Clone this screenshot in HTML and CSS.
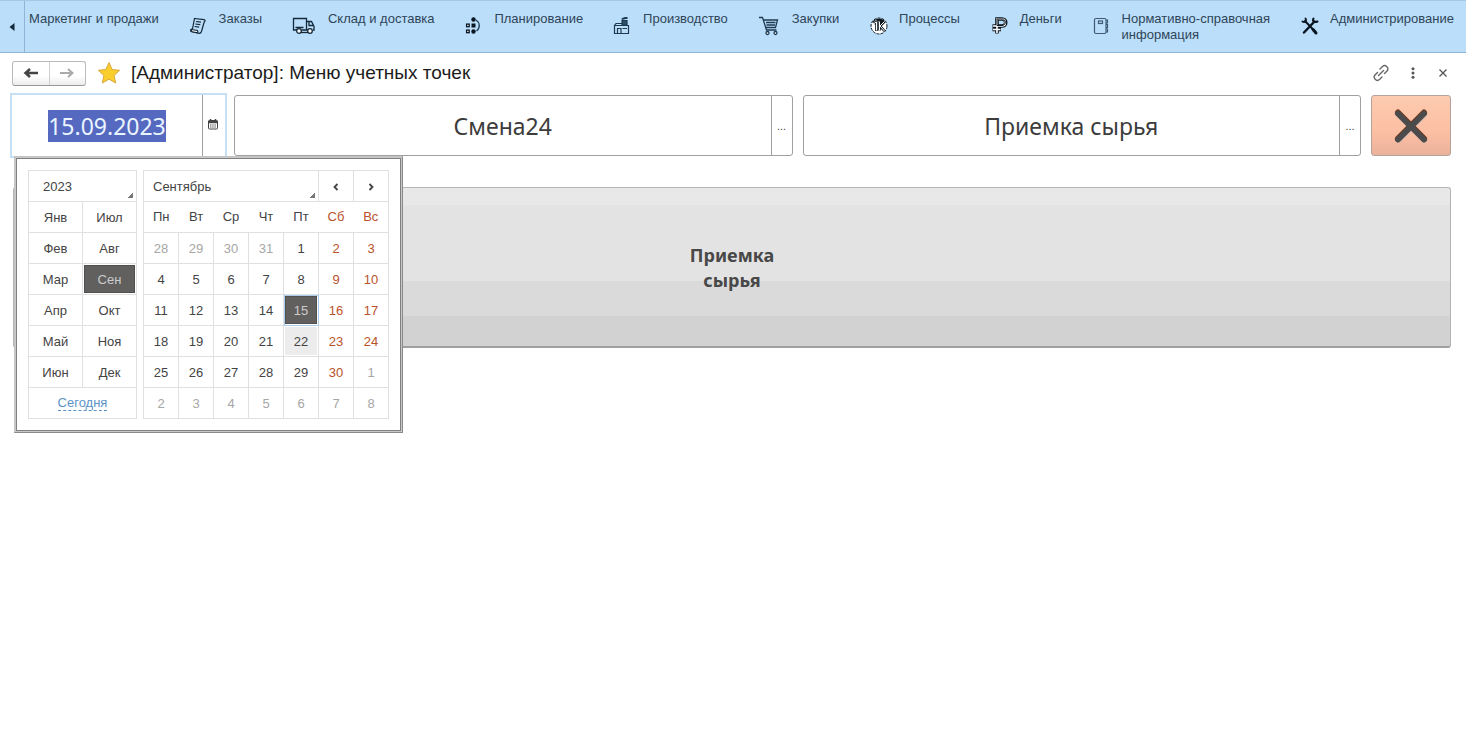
FILE: index.html
```html
<!DOCTYPE html>
<html lang="ru">
<head>
<meta charset="utf-8">
<title>Меню учетных точек</title>
<link rel="stylesheet" href="styles.css">
</head>
<body>
<nav class="sections">
  <button class="scroll-back" aria-label="Назад по разделам"><svg width="6" height="8" viewBox="0 0 6 8"><path d="M5.500 0v8L0.500 4z" fill="#12293b"/></svg></button>
  <div class="section-list">
    <a class="section" href="#">Маркетинг и продажи</a>
    <a class="section" href="#"><svg class="icon" width="20" height="20" viewBox="0 0 20 20" fill="none" stroke="#142838" stroke-width="1.200"><path d="M5.500 2.500l9.500 1.200c1.700.4 1.200 1.800.2 2.300l-2.700 9.500c-.5 1.500-1.500 2-3 1.700l-7-1.700c-1.500-.6-1-2.400.3-2.500h.7z"/><path d="M2.500 13.500l6 1c.6.900.2 2-.3 2.400l-6-1.400z" fill="#fff"/><path d="M7 5.500l5 .7M6.300 8l5 .7M5.600 10.500l4.500.7"/></svg>Заказы</a>
    <a class="section" href="#"><svg class="icon" width="26" height="20" viewBox="0 0 26 20" fill="none" stroke="#142838" stroke-width="1.300"><path d="M5 14H1.500V2.500h13V14H9.500M14.500 5.500h5l2.500 5v3.500h-1M14.500 14h1.500M17 5.500v4h5M3.500 11.500h8"/><circle cx="7" cy="15" r="2.300" fill="#fff"/><circle cx="18" cy="15" r="2.300" fill="#fff"/><path d="M9 16.500h7"/></svg>Склад и доставка</a>
    <a class="section" href="#"><svg class="icon" width="20" height="20" viewBox="0 0 20 20" fill="#0c1620"><circle cx="9.500" cy="3.500" r="2.200"/><rect x="7.500" y="7.500" width="4" height="4"/><circle cx="9.500" cy="15.500" r="2.200"/><g fill="#fff" stroke="#0c1620" stroke-width="1.300"><rect x="2.600" y="8.100" width="2.600" height="2.600"/><rect x="2.600" y="14.100" width="2.600" height="2.600"/></g><path d="M12 4c4 2.500 4.500 8 .5 11" fill="none" stroke="#23435c" stroke-width="1.300"/></svg>Планирование</a>
    <a class="section" href="#"><svg class="icon" width="20" height="20" viewBox="0 0 20 20" fill="none" stroke="#1f3a50" stroke-width="1.200"><path d="M1.500 17.500V9.500h14v8zM1.500 9.500L3 7.500h6M1 17.500h15M4.500 17v-4.500h3.500V17M9.500 12.500h4.500"/><path d="M9 4.500h5V9H9z" fill="#2d5069"/><path d="M9 3.500c1-1.500 2-.5 3-1.500h2.500" stroke-width="2"/></svg>Производство</a>
    <a class="section" href="#"><svg class="icon" width="24" height="20" viewBox="0 0 24 20" fill="none" stroke="#1f3a50" stroke-width="1.300"><path d="M1 1.500h3.500l4 12.500h10M5.500 4h14l-2 7.500H8M8 6.500h9.500M8.500 9h8.500"/><circle cx="9.500" cy="17" r="1.500" fill="#fff"/><circle cx="17.500" cy="17" r="1.500" fill="#fff"/></svg>Закупки</a>
    <a class="section" href="#"><svg class="icon" width="20" height="20" viewBox="0 0 20 20" fill="none"><circle cx="10" cy="10" r="8" fill="#fff" stroke="#101a22" stroke-width="1" stroke-dasharray="3 1"/><path d="M3.500 6C6 2 13 1 16 5.500L12 8.500 10 5.500 7 4 4 7z" fill="#101a22"/><path d="M5 7.500l2.500-1.500v9M10.500 5.500v9M15.500 5.500L11 10l4.500 5" stroke="#101a22" stroke-width="2.600"/><path d="M5 7.500l2.500-1.500v8.500M10.500 5.500v9M15.500 5.500L11 10l4.500 5" stroke="#fff" stroke-width="1"/></svg>Процессы</a>
    <a class="section" href="#"><svg class="icon" width="20" height="20" viewBox="0 0 20 20" fill="none"><path d="M7 17.500V3h5c5 0 5 7 0 7H2.500M2.500 13.500H11" stroke="#0c1620" stroke-width="3.600"/><path d="M7 17V3h5c4.500 0 4.500 7 0 7H3M3 13.500h7.500" stroke="#fff" stroke-width="1.600"/><path d="M7 9.500V3h5c4.500 0 4.500 6.500 0 6.500z" stroke="#0c1620"/></svg>Деньги</a>
    <a class="section" href="#"><svg class="icon" width="20" height="20" viewBox="0 0 20 20" fill="none" stroke="#3d5a72" stroke-width="1.200"><rect x="2.500" y="2.500" width="11.500" height="15" rx="1.500"/><path d="M14 4h1.500v3H14M14 8.500h1.500v3H14M14 13h1.500v3H14"/><rect x="6.500" y="5" width="4" height="2.500"/></svg>Нормативно-справочная<br>информация</a>
    <a class="section" href="#"><svg class="icon" width="20" height="20" viewBox="0 0 20 20" fill="none" stroke="#0c1620" stroke-linecap="round"><path d="M5 5l10.500 11" stroke-width="2"/><path d="M14.500 5.500L4 16.500" stroke-width="2.500"/><path d="M13 13.500l3 3.500" stroke-width="3"/><path d="M5.500 2.500c1.500 2-.5 4.500-3 3M13.500 2.500c-1.500 2.500 1 4.500 4 3" stroke-width="2"/></svg>Администрирование</a>
  </div>
</nav>

<header class="title-bar">
  <div class="history">
    <button aria-label="Назад"><svg width="16" height="12" viewBox="0 0 16 12"><path d="M15 6H4M7 2L2.500 6 7 10" fill="none" stroke="#444" stroke-width="2.500"/></svg></button>
    <button aria-label="Вперед"><svg width="16" height="12" viewBox="0 0 16 12"><path d="M1 6h11M9 2l4.500 4L9 10" fill="none" stroke="#aaa" stroke-width="2"/></svg></button>
  </div>
  <svg class="star" width="24" height="24" viewBox="0 0 24 24"><path d="M12 1.500l3.200 7 7.500.8-5.600 5.100 1.600 7.600-6.700-3.800L5.300 22l1.600-7.600L1.300 9.300l7.500-.8z" fill="#f9cd2c" stroke="#d9a940"/></svg>
  <h1>[Администратор]: Меню учетных точек</h1>
  <div class="window-tools">
    <button aria-label="Ссылка"><svg width="18" height="18" viewBox="0 0 18 18" fill="none" stroke="#666" stroke-width="1.400" stroke-linecap="round"><path d="M8 5l2.500-2.500c3-2.500 7 1.500 4.500 4.500L12.500 9.500M10 13l-2.500 2.500C4.500 18 .5 14 3 11L5.500 8.500M6.500 11.500l5-5"/></svg></button>
    <button aria-label="Еще"><svg width="4" height="12" viewBox="0 0 4 12" fill="#555"><circle cx="2" cy="1.700" r="1.500"/><circle cx="2" cy="6" r="1.500"/><circle cx="2" cy="10.300" r="1.500"/></svg></button>
    <button aria-label="Закрыть"><svg width="8" height="8" viewBox="0 0 8 8"><path d="M.5.500l7 7M7.500.500l-7 7" stroke="#555" stroke-width="1.300"/></svg></button>
  </div>
</header>

<main>
  <form class="filters">
    <div class="field date-field">
      <input id="date" type="text" value="15.09.2023" aria-label="Дата">
      <button type="button" class="pick" aria-label="Календарь"><svg width="10" height="11" viewBox="0 0 10 11"><path d="M2.500 0v3M7.500 0v3" stroke="#444" stroke-width="1.500"/><rect x=".5" y="1.500" width="9" height="8.500" rx="1" fill="#fff" stroke="#444"/><path d="M0 3h10" stroke="#444" stroke-width="2.500"/><path d="M2 6h6M2 8h6" stroke="#555" stroke-dasharray="1.500 .7"/></svg></button>

      <div class="calendar">
        <table class="months">
          <tr><th colspan="2" class="corner"><select aria-label="Год"><option>2023</option></select></th></tr>
          <tr><td><button type="button">Янв</button></td><td><button type="button">Июл</button></td></tr>
          <tr><td><button type="button">Фев</button></td><td><button type="button">Авг</button></td></tr>
          <tr><td><button type="button">Мар</button></td><td><button type="button" class="current">Сен</button></td></tr>
          <tr><td><button type="button">Апр</button></td><td><button type="button">Окт</button></td></tr>
          <tr><td><button type="button">Май</button></td><td><button type="button">Ноя</button></td></tr>
          <tr><td><button type="button">Июн</button></td><td><button type="button">Дек</button></td></tr>
          <tr><td colspan="2"><a class="today" href="#">Сегодня</a></td></tr>
        </table>
        <table class="days">
          <tr><th colspan="5" class="corner"><select aria-label="Месяц"><option>Сентябрь</option></select></th><th><button type="button" aria-label="Предыдущий месяц"><svg width="6" height="8" viewBox="0 0 6 8"><path d="M4.500 1l-3 3 3 3" fill="none" stroke="#444" stroke-width="1.800"/></svg></button></th><th><button type="button" aria-label="Следующий месяц"><svg width="6" height="8" viewBox="0 0 6 8"><path d="M1.500 1l3 3-3 3" fill="none" stroke="#444" stroke-width="1.800"/></svg></button></th></tr>
          <tr class="weekdays"><th>Пн</th><th>Вт</th><th>Ср</th><th>Чт</th><th>Пт</th><th class="off">Сб</th><th class="off">Вс</th></tr>
          <tr><td><button type="button" class="other">28</button></td><td><button type="button" class="other">29</button></td><td><button type="button" class="other">30</button></td><td><button type="button" class="other">31</button></td><td><button type="button">1</button></td><td><button type="button" class="off">2</button></td><td><button type="button" class="off">3</button></td></tr>
          <tr><td><button type="button">4</button></td><td><button type="button">5</button></td><td><button type="button">6</button></td><td><button type="button">7</button></td><td><button type="button">8</button></td><td><button type="button" class="off">9</button></td><td><button type="button" class="off">10</button></td></tr>
          <tr><td><button type="button">11</button></td><td><button type="button">12</button></td><td><button type="button">13</button></td><td><button type="button">14</button></td><td class="focused"><button type="button" class="current">15</button></td><td><button type="button" class="off">16</button></td><td><button type="button" class="off">17</button></td></tr>
          <tr><td><button type="button">18</button></td><td><button type="button">19</button></td><td><button type="button">20</button></td><td><button type="button">21</button></td><td><button type="button" class="hovered">22</button></td><td><button type="button" class="off">23</button></td><td><button type="button" class="off">24</button></td></tr>
          <tr><td><button type="button">25</button></td><td><button type="button">26</button></td><td><button type="button">27</button></td><td><button type="button">28</button></td><td><button type="button">29</button></td><td><button type="button" class="off">30</button></td><td><button type="button" class="other">1</button></td></tr>
          <tr><td><button type="button" class="other">2</button></td><td><button type="button" class="other">3</button></td><td><button type="button" class="other">4</button></td><td><button type="button" class="other">5</button></td><td><button type="button" class="other">6</button></td><td><button type="button" class="other">7</button></td><td><button type="button" class="other">8</button></td></tr>
        </table>
      </div>
    </div>
    <div class="field">
      <input type="text" value="Смена24" aria-label="Смена">
      <button type="button" class="pick">...</button>
    </div>
    <div class="field">
      <input type="text" value="Приемка сырья" aria-label="Учетная точка">
      <button type="button" class="pick">...</button>
    </div>
    <button type="button" class="cancel" aria-label="Закрыть меню"><svg width="36" height="36" viewBox="0 0 36 36" fill="none" stroke-linecap="round" stroke-width="6"><path d="M6 7l25 25M31 7L6 32" stroke="#d8bcb0"/><path d="M5 4.500l26 26M31 4.500L5 30.500" stroke="#7a3512"/><path d="M5 5.500l26 26M31 5.500L5 31.500" stroke="#4b4b4b"/></svg></button>
  </form>
  <button class="point">Приемка<br>сырья</button>
</main>
<script src="app.js"></script>
</body>
</html>
```

FILE: styles.css
```css
* { box-sizing: border-box; }

body {
  min-height: 100vh;
  margin: 0;
  background: #fff;
  color: #444;
  font: 13px/16px "Liberation Sans", Arial, sans-serif;
}

button, input, select {
  margin: 0;
  padding: 0;
  border: 0;
  background: none;
  color: inherit;
  font: inherit;
}

/* Section panel */
.sections {
  display: flex;
  height: 53px;
  background: #bbdefb;
  border-top: 1px solid #a5c8e6;
  border-bottom: 1px solid #8fb4d6;
}

.scroll-back {
  width: 25px;
  border-right: 1px solid #8fb4d6;
}

.section-list {
  flex: 1;
  display: flex;
  justify-content: space-between;
  padding: 10px 12px 0 4px;
}

.section {
  display: flex;
  gap: 10px;
  color: #2f4557;
  text-decoration: none;
  white-space: nowrap;
}

.section .icon { margin-top: 5px; }

/* Window title */
.title-bar {
  display: flex;
  align-items: center;
  height: 40px;
  padding: 0 16px 0 12px;
}

.history {
  display: flex;
  width: 74px;
  height: 25px;
  border: 1px solid #bbb;
  border-bottom-color: #999;
  border-radius: 3px;
  background: linear-gradient(#fff 60%, #ececec);
}

.history button { flex: 1; }
.history button + button { border-left: 1px solid #d0d0d0; }
.history svg { display: block; margin: 0 auto; }
.star { margin: 0 10px 0 11px; }

h1 {
  flex: 1;
  margin: 0;
  color: #1c1c1c;
  font-size: 19px;
  font-weight: 400;
  line-height: 24px;
}

.window-tools {
  display: flex;
  align-items: center;
  gap: 16px;
}

.window-tools button { display: flex; justify-content: center; min-width: 14px; }

/* Filter fields */
main {
  padding: 0 15px 0 10px;
}

.filters {
  display: flex;
  align-items: center;
  gap: 10px;
}

.field {
  flex: 1;
  display: flex;
  min-width: 0;
  height: 61px;
  border: 1px solid #a0a0a0;
  border-radius: 3px;
}

.field input {
  flex: 1;
  min-width: 0;
  color: #3c3c3c;
  font: 23px/32px "Noto Sans", "Open Sans", sans-serif;
  text-align: center;
  outline: 0;
}

.field input::selection { background: #5569c0; color: #eaf4ff; }

.pick {
  width: 21px;
  border-left: 1px solid #a0a0a0;
  font-size: 11px;
}

.date-field {
  position: relative;
  flex: 0 0 217px;
  height: 65px;
  margin-right: -3px;
  border: 2px solid #c5e0f4;
  border-radius: 0;
}

.date-field > .pick { width: 23px; padding-right: 2px; }

/* Drop-down calendar */
.calendar {
  position: absolute;
  z-index: 1;
  top: 61px;
  left: 2px;
  display: flex;
  gap: 6px;
  padding: 13px;
  border: 1px solid #8a8a8a;
  border-top-color: #c4c4c4;
  border-left-color: #c4c4c4;
  background: #fff;
  box-shadow: inset 0 0 0 1px #c8c8c8, inset 0 0 0 2px #808080;
}

.calendar table {
  border-collapse: collapse;
  table-layout: fixed;
}

.months { width: 109px; }
.days { width: 246px; }

.calendar th, .calendar td {
  height: 31px;
  padding: 1px;
  border: 1px solid #e0e0e0;
  font-weight: 400;
  text-align: center;
}

.calendar td button, .calendar th button {
  display: block;
  width: 100%;
  height: 28px;
  padding-top: 1px;
}

.calendar .corner {
  background: linear-gradient(135deg, transparent 50%, #777 50%) no-repeat right 3px bottom 3px / 5px 5px;
}

.calendar select {
  display: block;
  width: 100%;
  height: 28px;
  padding: 1px 0 0 8px;
  appearance: none;
}

.calendar .months select { padding-left: 13px; }
.calendar .weekdays th { border-left-style: hidden; border-right-style: hidden; padding-bottom: 2px; }
.calendar .weekdays th:first-child { border-left-style: solid; }
.calendar .weekdays th:last-child { border-right-style: solid; }
.calendar .off { color: #b9522b; }
.calendar .other { color: #a6a6a6; }
.calendar .hovered { background: #ececec; }
.calendar .current { background: #62605f; border: 1px solid #505050; color: #ccc; }
.calendar .focused { outline: 1px solid #a9cdea; outline-offset: -1px; }

.today {
  color: #5b93c5;
  text-decoration: none;
  border-bottom: 1px dashed #5b93c5;
}

/* Action buttons */
.cancel {
  display: flex;
  align-items: center;
  justify-content: center;
  width: 80px;
  height: 61px;
  border: 1px solid #b5a39b;
  border-radius: 3px;
  background: linear-gradient(#fccbb0, #fcbfa3 60%, #eab29c);
}

.point {
  display: block;
  width: calc(100% - 3px);
  height: 161px;
  margin: 29px 0 0 3px;
  padding-top: 2px;
  border: 1px solid #b4b4b4;
  border-bottom: 2px solid #a0a0a0;
  border-radius: 3px;
  background: linear-gradient(#e8e8e8 11%, #e3e3e3 11% 59%, #dadada 59% 81%, #d2d2d2 81%);
  color: #484848;
  font: 700 18px/25px "Noto Sans", "Open Sans", sans-serif;
}
```

FILE: app.js
```js
const dateInput = document.getElementById('date');
dateInput.focus();
dateInput.select();
```
